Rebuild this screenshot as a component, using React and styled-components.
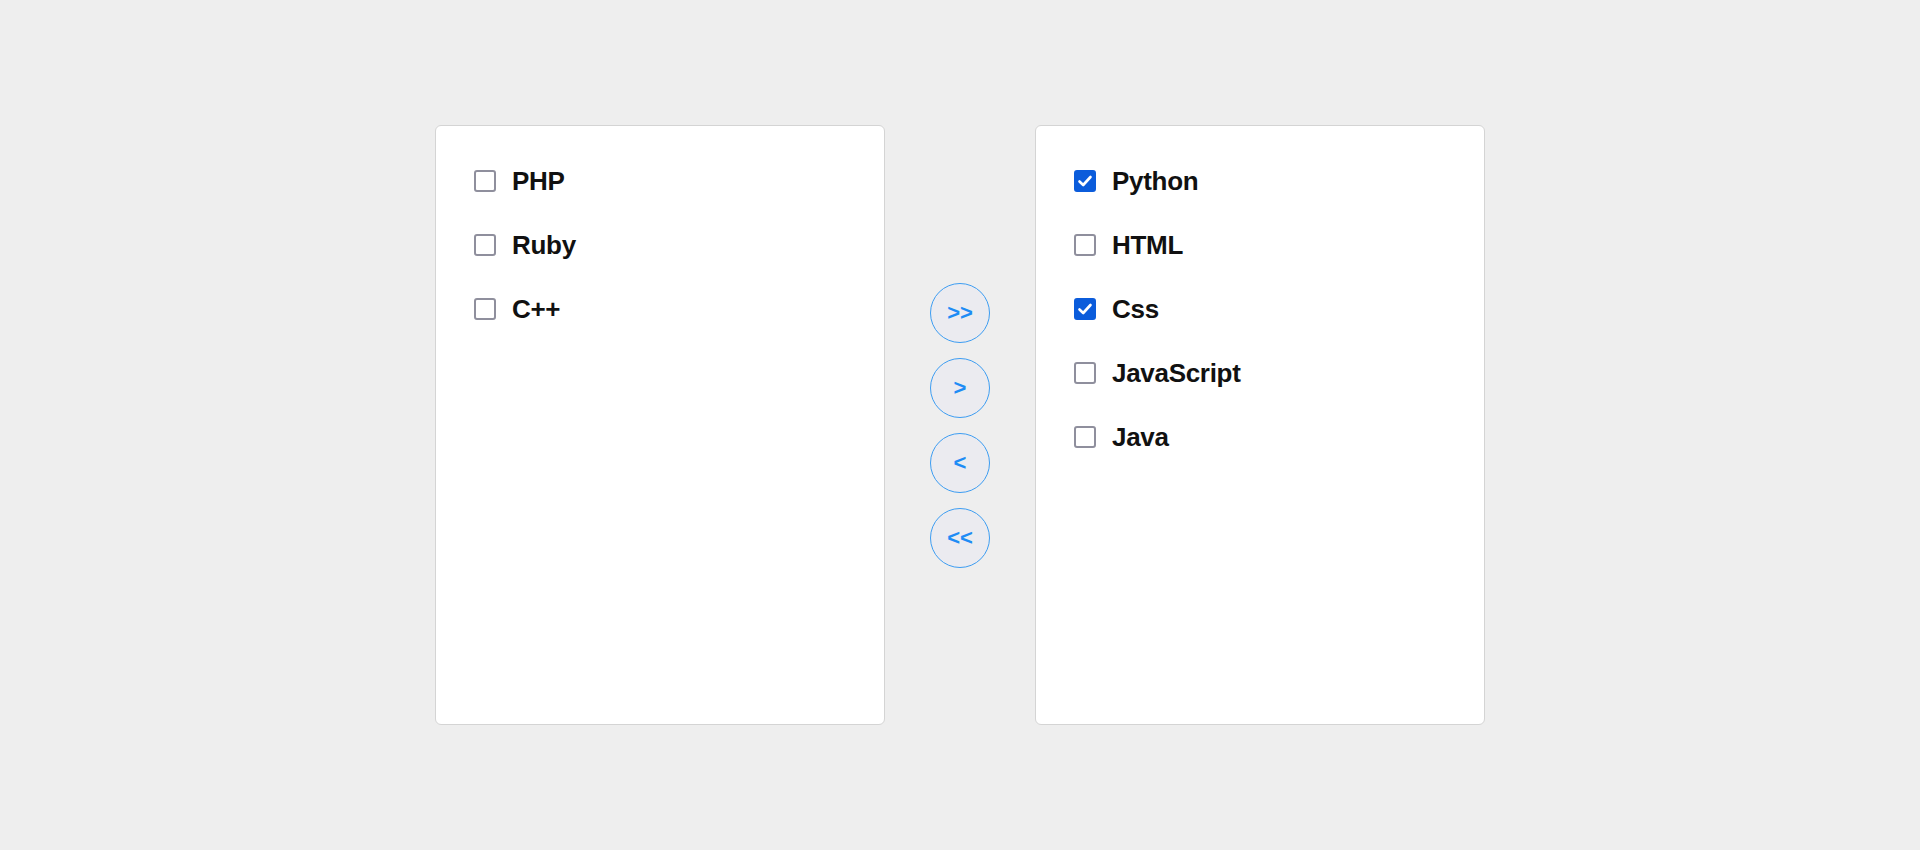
import React, { useState } from 'react';
import styled, { createGlobalStyle } from 'styled-components';

const GlobalStyle = createGlobalStyle`
  html, body {
    margin: 0;
    padding: 0;
    background-color: #eeeeee;
    font-family: "Liberation Sans", Arial, sans-serif;
  }
`;

const Page = styled.div`
  height: 850px;
  display: flex;
  align-items: center;
  justify-content: center;
  gap: 45px;
`;

const Panel = styled.div`
  box-sizing: border-box;
  width: 450px;
  height: 600px;
  padding: 23px 38px;
  background-color: #fff;
  border: 1px solid #d4d4d4;
  border-radius: 6px;
`;

const Row = styled.label`
  display: flex;
  align-items: center;
  gap: 16px;
  height: 64px;
  cursor: pointer;
`;

const Box = styled.span`
  box-sizing: border-box;
  width: 22px;
  height: 22px;
  display: flex;
  align-items: center;
  justify-content: center;
  border-radius: 3px;
  border: 2.5px solid ${(props) => (props.checked ? '#0b5cdb' : '#8f8f9d')};
  background-color: ${(props) => (props.checked ? '#0b5cdb' : '#fff')};
`;

const Label = styled.span`
  font-size: 26px;
  font-weight: 700;
  color: #111;
  letter-spacing: -0.3px;
`;

const Controls = styled.div`
  display: flex;
  flex-direction: column;
  gap: 15px;
`;

const Arrow = styled.button`
  width: 60px;
  height: 60px;
  padding: 0;
  border-radius: 50%;
  border: 1px solid #3d9df2;
  background-color: #ebebf0;
  color: #1e8cf5;
  font-family: "Liberation Sans", Arial, sans-serif;
  font-size: 22px;
  font-weight: 700;
  cursor: pointer;
`;

const Check = () => (
  <svg width="16" height="16" viewBox="0 0 16 16">
    <path d="M2.5 8.5 L6.2 12 L13.5 4" fill="none" stroke="#fff" strokeWidth="2.6" strokeLinecap="round" strokeLinejoin="round" />
  </svg>
);

const List = ({ items, toggle }) => (
  <Panel>
    {items.map((item) => (
      <Row key={item.name} onClick={() => toggle(item.name)}>
        <Box checked={item.checked}>{item.checked && <Check />}</Box>
        <Label>{item.name}</Label>
      </Row>
    ))}
  </Panel>
);

const App = () => {
  const [left, setLeft] = useState([
    { name: 'PHP', checked: false },
    { name: 'Ruby', checked: false },
    { name: 'C++', checked: false },
  ]);
  const [right, setRight] = useState([
    { name: 'Python', checked: true },
    { name: 'HTML', checked: false },
    { name: 'Css', checked: true },
    { name: 'JavaScript', checked: false },
    { name: 'Java', checked: false },
  ]);

  const toggler = (setter) => (name) =>
    setter((list) => list.map((i) => (i.name === name ? { ...i, checked: !i.checked } : i)));

  const moveAll = (from, setFrom, setTo) => {
    setTo((list) => [...list, ...from.map((i) => ({ ...i, checked: false }))]);
    setFrom([]);
  };

  const moveChecked = (from, setFrom, setTo) => {
    const picked = from.filter((i) => i.checked).map((i) => ({ ...i, checked: false }));
    setTo((list) => [...list, ...picked]);
    setFrom(from.filter((i) => !i.checked));
  };

  return (
    <>
      <GlobalStyle />
      <Page>
        <List items={left} toggle={toggler(setLeft)} />
        <Controls>
          <Arrow onClick={() => moveAll(left, setLeft, setRight)}>&gt;&gt;</Arrow>
          <Arrow onClick={() => moveChecked(left, setLeft, setRight)}>&gt;</Arrow>
          <Arrow onClick={() => moveChecked(right, setRight, setLeft)}>&lt;</Arrow>
          <Arrow onClick={() => moveAll(right, setRight, setLeft)}>&lt;&lt;</Arrow>
        </Controls>
        <List items={right} toggle={toggler(setRight)} />
      </Page>
    </>
  );
};

export default App;
